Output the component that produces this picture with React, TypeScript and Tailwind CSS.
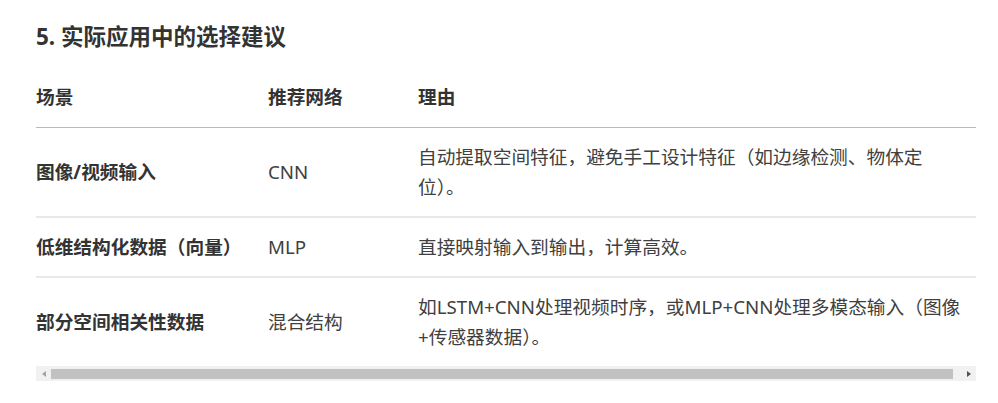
const rows = [
  {
    scene: '图像/视频输入',
    net: 'CNN',
    reason: '自动提取空间特征，避免手工设计特征（如边缘检测、物体定位）。',
  },
  {
    scene: '低维结构化数据（向量）',
    net: 'MLP',
    reason: '直接映射输入到输出，计算高效。',
  },
  {
    scene: '部分空间相关性数据',
    net: '混合结构',
    reason: '如LSTM+CNN处理视频时序，或MLP+CNN处理多模态输入（图像+传感器数据）。',
  },
];

function ScrollBar() {
  return (
    <div className="flex h-[15px] w-full items-center bg-[#f1f1f1]">
      <div className="flex h-[15px] w-[15px] items-center justify-center">
        <div className="h-0 w-0 border-y-[3px] border-r-[4px] border-y-transparent border-r-[#a3a3a3]" />
      </div>
      <div className="flex h-[15px] flex-1 items-center pr-[8px]">
        <div className="h-[10px] w-full bg-[#c1c1c1]" />
      </div>
      <div className="flex h-[15px] w-[15px] items-center justify-center">
        <div className="h-0 w-0 border-y-[3px] border-l-[4px] border-y-transparent border-l-[#505050]" />
      </div>
    </div>
  );
}

export default function App() {
  return (
    <div
      className="min-h-screen bg-white px-[36px] pt-[22px] text-[#404040]"
      style={{ fontFamily: '"Noto Sans", "Noto Sans CJK SC", sans-serif' }}
    >
      {/* Section title */}
      <h2 className="text-[22.5px] font-bold leading-[30px] text-[#333]">5. 实际应用中的选择建议</h2>

      <div className="mt-[15px] w-[940px]">
        <table className="w-full border-collapse text-left text-[18.7px] leading-[30px]">
          <thead>
            <tr className="border-b border-[#bababa]">
              <th className="w-[232px] py-[15px] font-bold text-[#333]">场景</th>
              <th className="w-[150px] py-[15px] font-bold text-[#333]">推荐网络</th>
              <th className="py-[15px] pr-[12px] font-bold text-[#333]">理由</th>
            </tr>
          </thead>
          <tbody>
            {rows.map((r, i) => (
              <tr key={r.scene} className={i < rows.length - 1 ? 'border-b-2 border-[#e8e8e8]' : ''}>
                <td className="py-[14px] pr-[8px] font-bold text-[#333]">{r.scene}</td>
                <td className="py-[14px]">{r.net}</td>
                <td className="py-[14px] pr-[12px]">{r.reason}</td>
              </tr>
            ))}
          </tbody>
        </table>
        <ScrollBar />
      </div>
    </div>
  );
}
